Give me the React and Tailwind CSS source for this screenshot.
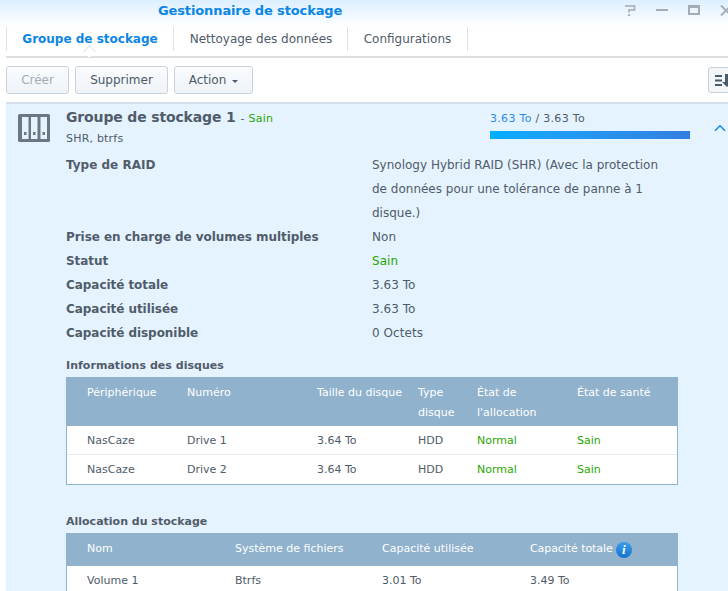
import { ChevronUp } from "lucide-react";

const details = [
  ["Prise en charge de volumes multiples", "Non"],
  ["Statut", "Sain"],
  ["Capacité totale", "3.63 To"],
  ["Capacité utilisée", "3.63 To"],
  ["Capacité disponible", "0 Octets"],
];

const disks = [
  ["NasCaze", "Drive 1", "3.64 To", "HDD", "Normal", "Sain"],
  ["NasCaze", "Drive 2", "3.64 To", "HDD", "Normal", "Sain"],
];

function PoolIcon() {
  return (
    <svg width="32" height="28" viewBox="0 0 32 28" className="shrink-0">
      <rect width="32" height="28" rx="1.5" fill="#6b7785" />
      <rect x="4" y="3" width="6.5" height="22" fill="#e5f3ff" />
      <rect x="13" y="3" width="6.5" height="22" fill="#e5f3ff" />
      <rect x="22.5" y="3" width="6.5" height="22" fill="#e5f3ff" />
      <rect x="6" y="18" width="2.5" height="3" fill="#6b7785" />
      <rect x="15" y="18" width="2.5" height="3" fill="#6b7785" />
      <rect x="24.5" y="18" width="2.5" height="3" fill="#6b7785" />
    </svg>
  );
}

function WindowButtons() {
  return (
    <div className="flex items-center gap-[20px] h-[20px] -mr-[4px]">
      <svg width="12" height="11" viewBox="0 0 12 11" fill="none" stroke="#a3abb3" strokeWidth="1.6">
        <path d="M1 1h9.5v4H5v2.5" />
        <path d="M4 9.2h2.2V11H4z" fill="#a3abb3" stroke="none" />
      </svg>
      <div className="w-3 h-[2px] bg-[#a3abb3]" />
      <div className="w-3 h-[10px] border-2 border-[#a3abb3] border-t-[3px]" />
      <svg width="12" height="11" viewBox="0 0 12 11" stroke="#a3abb3" strokeWidth="1.8">
        <path d="M1 0.5l10 10M11 0.5L1 10.5" />
      </svg>
    </div>
  );
}

function Btn({ children, disabled, className }) {
  return (
    <div
      className={`h-[28px] flex items-center justify-center rounded-[3px] border border-[#c6d2dd] bg-gradient-to-b from-[#fafcfe] to-[#eef3f8] ${disabled ? "text-[#a3acb5]" : "text-[#4d5a68]"} ${className}`}
    >
      {children}
    </div>
  );
}

export default function App() {
  return (
    <div className="w-[728px] h-[591px] overflow-hidden bg-white text-[12px] text-[#4f5b69] font-['DejaVu_Sans',sans-serif]">
      <div className="h-[27px] bg-gradient-to-b from-[#dcefff] to-white flex justify-between pl-[158px]">
        <div className="font-bold text-[13px] leading-[21px] tracking-[-0.12px] text-[#0b86e4]">Gestionnaire de stockage</div>
        <WindowButtons />
      </div>

      <div className="h-[31px] ml-[6px] border-b-2 border-[#dcdfe2] relative">
        <div className="flex h-[24px] items-center">
          <div className="w-[168px] h-full flex items-center justify-center font-bold text-[12px] text-[#0b86e4] border-l border-r border-[#dce1e6]">
            Groupe de stockage
          </div>
          <div className="w-[174px] h-full flex items-center justify-center pl-[1px] border-r border-[#dce1e6]">
            Nettoyage des données
          </div>
          <div className="w-[120px] h-full flex items-center justify-center border-r border-[#dce1e6]">
            Configurations
          </div>
        </div>
        <div className="absolute left-[79px] top-[20px] w-[9px] h-[9px] rotate-45 bg-white border-l border-t border-[#dcdfe2]" />
      </div>

      <div className="h-[44px] pl-[6px] flex items-center gap-[6px]">
        <Btn disabled className="w-[63px]">Créer</Btn>
        <Btn className="w-[93px]">Supprimer</Btn>
        <Btn className="w-[79px] gap-[6px]">
          Action
          <span className="border-x-[3px] border-x-transparent border-t-[3px] border-t-[#4d5a68] mt-[2px]" />
        </Btn>
        <div className="ml-auto -mr-[8px] w-[28px] h-[26px] rounded-[3px] border border-[#c6d2dd] bg-[#f3f6f9] flex items-center pl-[6px]">
          <svg width="18" height="13" viewBox="0 0 18 13" fill="#4d5a68" className="shrink-0">
            <rect y="1" width="7" height="2" />
            <rect y="5.5" width="7" height="2" />
            <rect y="10" width="7" height="2" />
            <path d="M10 0h4v8h3l-5 5-5-5h3z" />
          </svg>
        </div>
      </div>

      <div className="ml-[6px] h-[489px] border-t-2 border-[#d5e0ea] bg-[#e5f3ff]">
        <div className="flex items-start pl-[12px] pt-[10px] h-[40px]">
          <PoolIcon />
          <div className="ml-[16px] -mt-[4px]">
            <div className="flex items-baseline leading-[14px]">
              <span className="font-bold text-[14px] tracking-[-0.15px] text-[#515c6a]">Groupe de stockage 1</span>
              <span className="ml-[5px] text-[11px] tracking-[0.25px]">- <span className="text-[#29a600]">Sain</span></span>
            </div>
            <div className="text-[11px] mt-[6px] leading-[14px] tracking-[0.2px]">SHR, btrfs</div>
          </div>
          <div className="ml-auto w-[200px] mr-[20px] -mt-[2px]">
            <div className="text-[11px] leading-[14px] tracking-[0.3px] whitespace-nowrap">
              <span className="text-[#2d8ae6]">3.63 To</span> / 3.63 To
            </div>
            <div className="h-[8px] mt-[5px] bg-gradient-to-r from-[#00adff] to-[#317fe0]" />
          </div>
          <ChevronUp size={18} strokeWidth={2.2} className="text-[#1c8fe3] shrink-0 mt-[5px] ml-[1px] -mr-[1px]" />
        </div>

        <div className="pl-[60px] pt-[9px]">
          <div className="flex">
            <div className="w-[306px] font-bold text-[12px] leading-[24px] shrink-0 text-[#515c6a]">Type de RAID</div>
            <div className="w-[300px] leading-[24px]">
              Synology Hybrid RAID (SHR) (Avec la protection de données pour une tolérance de panne à 1 disque.)
            </div>
          </div>
          {details.map(([label, value]) => (
            <div key={label} className="flex leading-[24px]">
              <div className="w-[306px] font-bold tracking-[-0.05px] shrink-0 text-[#515c6a]">{label}</div>
              <div className={`tracking-[0.05px] ${value === "Sain" ? "text-[#29a600]" : ""}`}>{value}</div>
            </div>
          ))}
        </div>

        <div className="pl-[60px]">
          <div className="mt-[13px] h-[19px] font-bold text-[11px] leading-[16px] tracking-[0.04px] text-[#515c6a]">Informations des disques</div>
          <div className="w-[612px] h-[108px] border border-t-0 border-[#90b2cd] bg-white text-[11px]">
            <div className="h-[49px] bg-[#90b2cd] text-white grid grid-cols-[100px_130px_101px_59px_100px_1fr] pl-[20px] pt-[5px] leading-[20px]">
              <div className="pt-[1px]">Périphérique</div>
              <div className="pt-[1px]">Numéro</div>
              <div className="pt-[1px]">Taille du disque</div>
              <div className="pt-[1px]">Type disque</div>
              <div className="pt-[1px]">État de l'allocation</div>
              <div className="pt-[1px]">État de santé</div>
            </div>
            {disks.map((d, i) => (
              <div key={d[1]} className={`h-[29px] grid grid-cols-[100px_130px_101px_59px_100px_1fr] pl-[20px] pt-[2px] items-center ${i === 0 ? "border-b border-[#e6edf3]" : ""}`}>
                <div>{d[0]}</div>
                <div>{d[1]}</div>
                <div>{d[2]}</div>
                <div>{d[3]}</div>
                <div className="text-[#29a600]">{d[4]}</div>
                <div className="text-[#29a600]">{d[5]}</div>
              </div>
            ))}
          </div>

          <div className="mt-[29px] h-[19px] font-bold text-[11px] leading-[16px] text-[#515c6a]">Allocation du stockage</div>
          <div className="w-[612px] border-x border-[#90b2cd] bg-white text-[11px]">
            <div className="h-[33px] bg-[#90b2cd] text-white grid grid-cols-[148px_147px_148px_1fr] pl-[20px] items-center">
              <div>Nom</div>
              <div>Système de fichiers</div>
              <div>Capacité utilisée</div>
              <div className="flex items-center gap-[3px] tracking-[-0.07px]">
                Capacité totale
                <span className="w-[16px] h-[16px] rounded-full bg-gradient-to-b from-[#3a9cec] to-[#1273d0] flex items-center justify-center text-[13px] italic font-bold font-['Liberation_Serif',serif]">i</span>
              </div>
            </div>
            <div className="h-[29px] grid grid-cols-[148px_147px_148px_1fr] pl-[20px] pt-[2px] items-center">
              <div>Volume 1</div>
              <div>Btrfs</div>
              <div>3.01 To</div>
              <div>3.49 To</div>
            </div>
          </div>
        </div>
      </div>
    </div>
  );
}
